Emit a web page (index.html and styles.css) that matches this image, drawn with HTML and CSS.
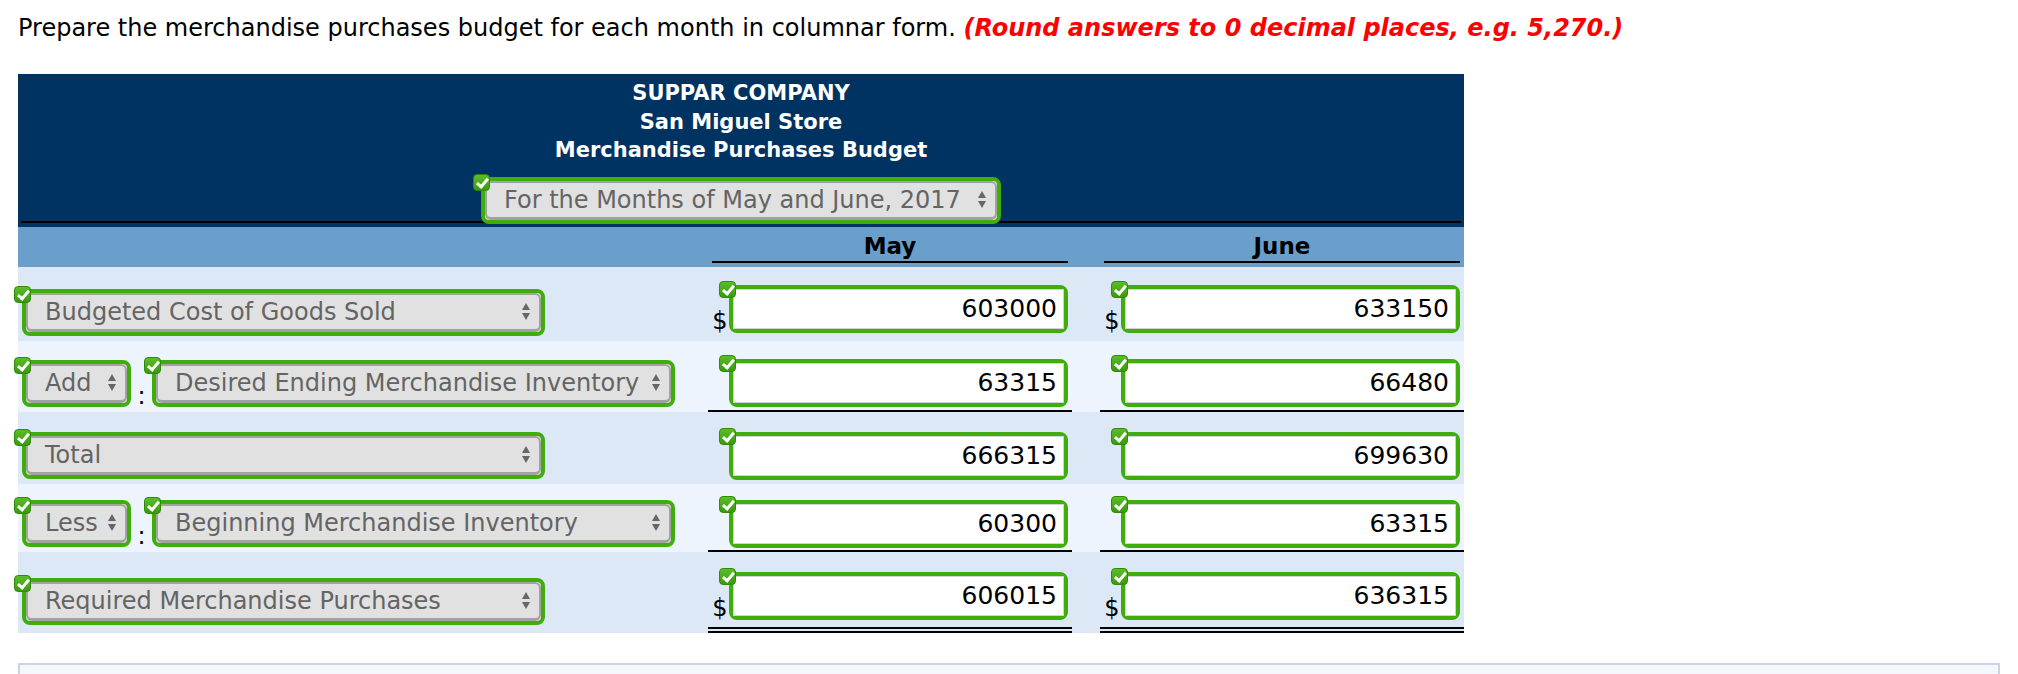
FILE: index.html
```html
<!DOCTYPE html>
<html>
<head>
    <title>Merchandise Purchases Budget</title>
    <link rel="stylesheet" href="styles.css">
</head>
<body>
    <div class="page">
        <p class="question">Prepare the merchandise purchases budget for each month in columnar form. <span class="hint">(Round answers to 0 decimal places, e.g. 5,270.)</span></p>

        <div class="budget">
            <div class="head">
                <div class="head-in">
                    <div class="title">SUPPAR COMPANY</div>
                    <div class="title">San Miguel Store</div>
                    <div class="title">Merchandise Purchases Budget</div>
                    <div class="pick pick-period">
                        <span class="ok"></span>
                        <span class="pick-in">For the Months of May and June, 2017<i class="arrows"></i></span>
                    </div>
                </div>
            </div>

            <div class="cols">
                <div></div>
                <div class="col-name">May</div>
                <div class="col-name">June</div>
            </div>

            <div class="row row-first">
                <div class="label">
                    <div class="pick pick-wide">
                        <span class="ok"></span>
                        <span class="pick-in">Budgeted Cost of Goods Sold<i class="arrows"></i></span>
                    </div>
                </div>
                <div class="money">
                    <span class="dollar">$</span>
                    <div class="amt"><span class="ok"></span><span class="amt-in">603000</span></div>
                </div>
                <div class="money">
                    <span class="dollar">$</span>
                    <div class="amt"><span class="ok"></span><span class="amt-in">633150</span></div>
                </div>
            </div>

            <div class="row row-sub row-add">
                <div class="label">
                    <div class="pick pick-op">
                        <span class="ok"></span>
                        <span class="pick-in">Add<i class="arrows"></i></span>
                    </div>
                    <span class="colon">:</span>
                    <div class="pick pick-wide">
                        <span class="ok"></span>
                        <span class="pick-in">Desired Ending Merchandise Inventory<i class="arrows"></i></span>
                    </div>
                </div>
                <div class="money">
                    <span class="dollar"></span>
                    <div class="amt"><span class="ok"></span><span class="amt-in">63315</span></div>
                </div>
                <div class="money">
                    <span class="dollar"></span>
                    <div class="amt"><span class="ok"></span><span class="amt-in">66480</span></div>
                </div>
            </div>

            <div class="row row-mid">
                <div class="label">
                    <div class="pick pick-wide">
                        <span class="ok"></span>
                        <span class="pick-in">Total<i class="arrows"></i></span>
                    </div>
                </div>
                <div class="money">
                    <span class="dollar"></span>
                    <div class="amt"><span class="ok"></span><span class="amt-in">666315</span></div>
                </div>
                <div class="money">
                    <span class="dollar"></span>
                    <div class="amt"><span class="ok"></span><span class="amt-in">699630</span></div>
                </div>
            </div>

            <div class="row row-sub row-less">
                <div class="label">
                    <div class="pick pick-op">
                        <span class="ok"></span>
                        <span class="pick-in">Less<i class="arrows"></i></span>
                    </div>
                    <span class="colon">:</span>
                    <div class="pick pick-wide">
                        <span class="ok"></span>
                        <span class="pick-in">Beginning Merchandise Inventory<i class="arrows"></i></span>
                    </div>
                </div>
                <div class="money">
                    <span class="dollar"></span>
                    <div class="amt"><span class="ok"></span><span class="amt-in">60300</span></div>
                </div>
                <div class="money">
                    <span class="dollar"></span>
                    <div class="amt"><span class="ok"></span><span class="amt-in">63315</span></div>
                </div>
            </div>

            <div class="row row-total">
                <div class="label">
                    <div class="pick pick-wide">
                        <span class="ok"></span>
                        <span class="pick-in">Required Merchandise Purchases<i class="arrows"></i></span>
                    </div>
                </div>
                <div class="money">
                    <span class="dollar">$</span>
                    <div class="amt"><span class="ok"></span><span class="amt-in">606015</span></div>
                </div>
                <div class="money">
                    <span class="dollar">$</span>
                    <div class="amt"><span class="ok"></span><span class="amt-in">636315</span></div>
                </div>
            </div>
        </div>

        <div class="next-box"></div>
    </div>
</body>
</html>
```

FILE: styles.css
```css
body {
    margin: 0;
    font-family: "DejaVu Sans", Verdana, sans-serif;
    font-size: 24px;
    color: #000;
    background-color: #fff;
}
.page {
    padding: 14px 18px 0 18px;
}
.question {
    margin: 0;
    line-height: 28px;
}
.hint {
    color: #f00;
    font-weight: bold;
    font-style: italic;
}
.budget {
    width: 1446px;
    margin-top: 32px;
}

/* navy title block */
.head {
    background-color: #003262;
    padding-bottom: 4px;
}
.head-in {
    margin: 0 3px;
    padding-top: 5px;
    border-bottom: 2px solid #000;
    display: flex;
    flex-direction: column;
    align-items: center;
}
.title {
    color: #fff;
    font-size: 21px;
    font-weight: bold;
    line-height: 28.5px;
}
.pick-period {
    width: 520px;
    margin-top: 12px;
    margin-bottom: -3px;
}

/* month headings */
.cols {
    display: grid;
    grid-template-columns: 662px 364px 364px;
    column-gap: 28px;
    height: 40px;
    background-color: #6a9fcb;
}
.col-name {
    margin: 7px 4px 4px 4px;
    border-bottom: 2px solid #000;
    text-align: center;
    font-size: 23px;
    font-weight: bold;
    line-height: 25px;
}

/* body rows */
.row {
    display: grid;
    grid-template-columns: 662px 364px 364px;
    column-gap: 28px;
    height: 72px;
    background-color: #dde8f7;
}
.row-sub {
    background-color: #edf4fd;
}
.label {
    display: flex;
    align-items: flex-start;
    padding-left: 4px;
    padding-top: 20px;
}
.money {
    display: flex;
    align-items: flex-start;
    padding-top: 20px;
    box-sizing: border-box;
}
.row-sub .money {
    border-bottom: 2px solid #000;
}
.row-total .money {
    border-bottom: 6px double #000;
}
.row-first { height: 74px; }
.row-first .label { padding-top: 22px; }
.row-first .money { padding-top: 18px; }
.row-add { height: 71px; }
.row-add .label { padding-top: 19px; }
.row-add .money { padding-top: 18px; }
.row-less { height: 68px; }
.row-less .label, .row-less .money { padding-top: 16px; }
.row-total { height: 81px; }
.row-total .label { padding-top: 26px; }

/* select look-alike */
.pick {
    position: relative;
    height: 47px;
    box-sizing: border-box;
    border: 4px solid #3fae0c;
    border-radius: 8px;
    background-color: #e1e1e1;
}
.pick-wide {
    width: 523px;
}
.pick-op {
    width: 109px;
}
.pick-in {
    display: flex;
    align-items: center;
    justify-content: space-between;
    height: 100%;
    box-sizing: border-box;
    padding: 0 9px 0 17px;
    border: 2px solid #a2a2a2;
    border-bottom-width: 3px;
    border-radius: 6px;
    color: #646464;
    white-space: nowrap;
}
.arrows {
    display: flex;
    flex-direction: column;
    gap: 3px;
    margin-left: 8px;
}
.arrows::before,
.arrows::after {
    content: "";
    border-left: 4.5px solid transparent;
    border-right: 4.5px solid transparent;
}
.arrows::before {
    border-bottom: 7px solid #666;
}
.arrows::after {
    border-top: 7px solid #666;
}
.colon {
    align-self: flex-end;
    width: 21px;
    line-height: 1;
    margin-bottom: 4px;
    text-align: center;
}

/* amount box */
.dollar {
    display: flex;
    align-items: flex-end;
    justify-content: center;
    width: 21px;
    height: 48px;
    line-height: 1;
    padding-left: 3px;
    box-sizing: border-box;
}
.amt {
    position: relative;
    width: 339px;
    height: 48px;
    box-sizing: border-box;
    border: 4px solid #3fae0c;
    border-radius: 8px;
    background-color: #fff;
}
.amt-in {
    display: flex;
    align-items: center;
    justify-content: flex-end;
    height: 100%;
    box-sizing: border-box;
    padding-right: 6px;
    border: 1px solid #d2d2d2;
    font-size: 25px;
}

/* green check badge */
.ok {
    position: absolute;
    left: -12px;
    top: -7px;
    width: 17px;
    height: 17px;
    box-sizing: border-box;
    border: 1px solid #2f8a06;
    border-radius: 4px;
    background: linear-gradient(#5cbd2a, #3a9a0e);
}
.amt .ok {
    left: -14px;
    top: -8px;
}
.ok::after {
    content: "";
    position: absolute;
    left: 5px;
    top: 1px;
    width: 4px;
    height: 9px;
    border: solid #fff;
    border-width: 0 3px 3px 0;
    transform: rotate(40deg);
}

.next-box {
    margin-top: 30px;
    height: 40px;
    border: 2px solid #cbd5e1;
    border-bottom: none;
    background-color: #f4f7fb;
}
```
